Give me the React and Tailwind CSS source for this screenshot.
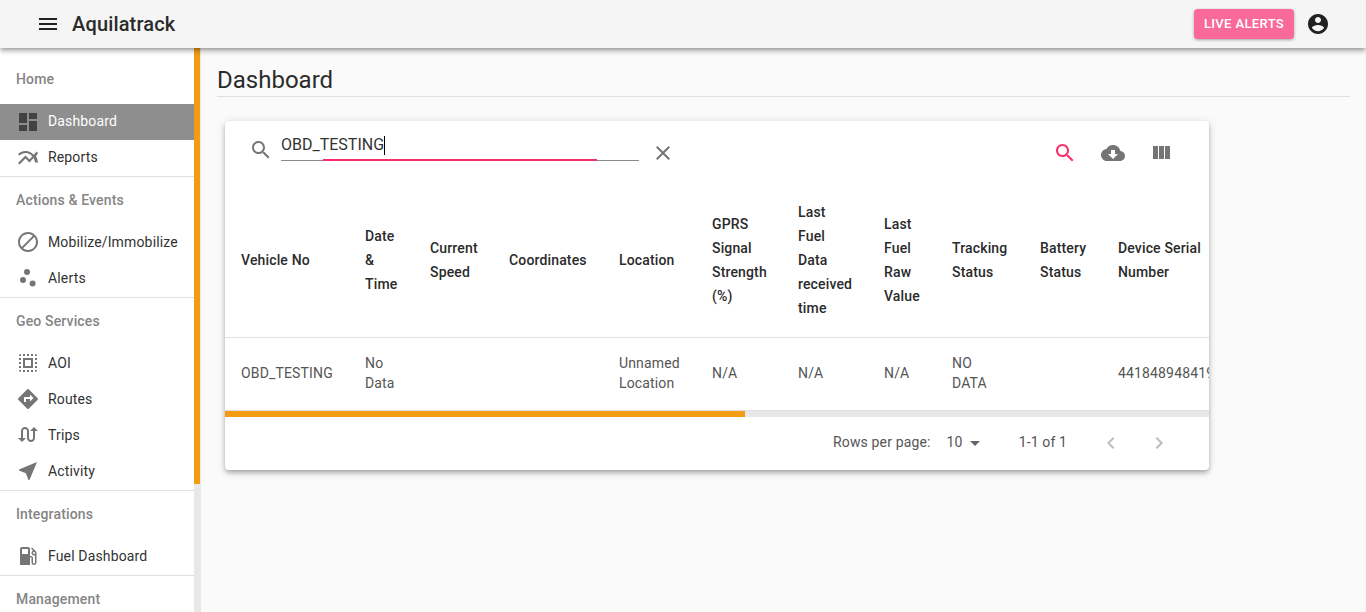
import React from 'react';

const paths = {
  menu: 'M3 18h18v-2H3v2zm0-5h18v-2H3v2zm0-7v2h18V6H3z',
  dashboard: 'M3 13h8V3H3v10zm0 8h8v-6H3v6zm10 0h8V11h-8v10zm0-18v6h8V3h-8z',
  reports: 'M22 6.92l-1.41-1.41-2.85 3.21C15.68 6.4 12.83 5 9.61 5 6.72 5 4.07 6.16 2 8l1.42 1.42C5.12 7.93 7.27 7 9.61 7c2.74 0 5.09 1.26 6.77 3.24l-2.88 3.24-4-4L2 16.99l1.5 1.5 6-6.01 4 4 4.05-4.55c.75 1.35 1.25 2.9 1.44 4.55H21.99c-.22-2.3-.95-4.39-2.04-6.14L22 6.92z',
  block: 'M12 2C6.48 2 2 6.48 2 12s4.48 10 10 10 10-4.48 10-10S17.52 2 12 2zM4 12c0-4.42 3.58-8 8-8 1.85 0 3.55.63 4.9 1.69L5.69 16.9C4.63 15.55 4 13.85 4 12zm8 8c-1.85 0-3.55-.63-4.9-1.69L18.31 7.1C19.37 8.45 20 10.15 20 12c0 4.42-3.58 8-8 8z',
  scatter: 'M7 11a3 3 0 1 0 0 6 3 3 0 0 0 0-6zM11 3a3 3 0 1 0 0 6 3 3 0 0 0 0-6zM16.6 14.6a3 3 0 1 0 0 6 3 3 0 0 0 0-6z',
  selectAll: 'M3 5h2V3c-1.1 0-2 .9-2 2zm0 8h2v-2H3v2zm4 8h2v-2H7v2zM3 9h2V7H3v2zm10-6h-2v2h2V3zm6 0v2h2c0-1.1-.9-2-2-2zM5 21v-2H3c0 1.1.9 2 2 2zm-2-4h2v-2H3v2zM9 3H7v2h2V3zm2 18h2v-2h-2v2zm8-8h2v-2h-2v2zm0 8c1.1 0 2-.9 2-2h-2v2zm0-12h2V7h-2v2zm0 8h2v-2h-2v2zm-4 4h2v-2h-2v2zm0-16h2V3h-2v2zM7 17h10V7H7v10zm2-8h6v6H9V9z',
  directions: 'M21.71 11.29l-9-9a.996.996 0 00-1.41 0l-9 9a.996.996 0 000 1.41l9 9c.39.39 1.02.39 1.41 0l9-9a.996.996 0 000-1.41zM14 14.5V12h-4v3H8v-4c0-.55.45-1 1-1h5V7.5l3.5 3.5-3.5 3.5z',
  swapCalls: 'M18 4l-4 4h3v7c0 1.1-.9 2-2 2s-2-.9-2-2V8c0-2.21-1.79-4-4-4S5 5.79 5 8v7H2l4 4 4-4H7V8c0-1.1.9-2 2-2s2 .9 2 2v7c0 2.21 1.79 4 4 4s4-1.79 4-4V8h3l-4-4z',
  nearMe: 'M21 3L3 10.53v.98l6.84 2.65L12.48 21h.98L21 3z',
  gas: 'M19.77 7.23l.01-.01-3.72-3.72L15 4.56l2.11 2.11c-.94.36-1.61 1.26-1.61 2.33 0 1.38 1.12 2.5 2.5 2.5.36 0 .69-.08 1-.21v7.21c0 .55-.45 1-1 1s-1-.45-1-1V14c0-1.1-.9-2-2-2h-1V5c0-1.1-.9-2-2-2H6c-1.1 0-2 .9-2 2v16h10v-7.5h1.5v5c0 1.38 1.12 2.5 2.5 2.5s2.5-1.12 2.5-2.5V9c0-.69-.28-1.32-.73-1.77zM12 10H6V5h6v5zm6 0c-.55 0-1-.45-1-1s.45-1 1-1 1 .45 1 1-.45 1-1 1z',
  search: 'M15.5 14h-.79l-.28-.27C15.41 12.59 16 11.11 16 9.5 16 5.91 13.09 3 9.5 3S3 5.91 3 9.5 5.91 16 9.5 16c1.61 0 3.09-.59 4.23-1.57l.27.28v.79l5 4.99L20.49 19l-4.99-5zm-6 0C7.01 14 5 11.99 5 9.5S7.01 5 9.5 5 14 7.01 14 9.5 11.99 14 9.5 14z',
  clear: 'M19 6.41L17.59 5 12 10.59 6.41 5 5 6.41 10.59 12 5 17.59 6.41 19 12 13.41 17.59 19 19 17.59 13.41 12z',
  cloud: 'M19.35 10.04C18.67 6.59 15.64 4 12 4 9.11 4 6.6 5.64 5.35 8.04 2.34 8.36 0 10.91 0 14c0 3.31 2.69 6 6 6h13c2.76 0 5-2.24 5-5 0-2.64-2.05-4.78-4.65-4.96zM17 13l-5 5-5-5h3V9h4v4h3z',
  columns: 'M10 18h5V5h-5v13zm-6 0h5V5H4v13zM16 5v13h5V5h-5z',
  account: 'M12 2C6.48 2 2 6.48 2 12s4.48 10 10 10 10-4.48 10-10S17.52 2 12 2zm0 3c1.66 0 3 1.34 3 3s-1.34 3-3 3-3-1.34-3-3 1.34-3 3-3zm0 14.2c-2.5 0-4.71-1.28-6-3.22.03-1.99 4-3.08 6-3.08 1.99 0 5.97 1.09 6 3.08-1.29 1.94-3.5 3.22-6 3.22z',
  left: 'M15.41 7.41L14 6l-6 6 6 6 1.41-1.41L10.83 12z',
  right: 'M10 6L8.59 7.41 13.17 12l-4.58 4.59L10 18l6-6z',
  drop: 'M7 10l5 5 5-5z',
};

function Icon({ name, className }) {
  return (
    <svg viewBox="0 0 24 24" className={`w-6 h-6 shrink-0 fill-current ${className || ''}`}>
      <path d={paths[name]} />
    </svg>
  );
}

const menu = [
  { title: 'Home', first: true, items: [['dashboard', 'Dashboard', true], ['reports', 'Reports']] },
  { title: 'Actions & Events', items: [['block', 'Mobilize/Immobilize'], ['scatter', 'Alerts']] },
  { title: 'Geo Services', items: [['selectAll', 'AOI'], ['directions', 'Routes'], ['swapCalls', 'Trips'], ['nearMe', 'Activity']] },
  { title: 'Integrations', items: [['gas', 'Fuel Dashboard']] },
  { title: 'Management', items: [] },
];

const columns = [
  { label: 'Vehicle No', width: 'w-[124px]', value: 'OBD_TESTING' },
  { label: 'Date & Time', width: 'w-[65px]', value: 'No Data' },
  { label: 'Current Speed', width: 'w-[79px]', value: '' },
  { label: 'Coordinates', width: 'w-[110px]', value: '' },
  { label: 'Location', width: 'w-[93px]', value: 'Unnamed Location' },
  { label: 'GPRS Signal Strength (%)', width: 'w-[86px]', value: 'N/A' },
  { label: 'Last Fuel Data received time', width: 'w-[86px]', value: 'N/A' },
  { label: 'Last Fuel Raw Value', width: 'w-[68px]', value: 'N/A' },
  { label: 'Tracking Status', width: 'w-[88px]', value: 'NO DATA' },
  { label: 'Battery Status', width: 'w-[78px]', value: '' },
  { label: 'Device Serial Number', width: 'w-[116px]', value: '441848948419', nowrap: true },
  { label: '', width: 'w-[869px]', value: '' },
];

function Sidebar() {
  return (
    <aside className="w-[201px] shrink-0 flex bg-white border-r border-[#e8e8e8] overflow-hidden">
      <nav className="w-[194px] shrink-0 tracking-[0.15px]">
        {menu.map((section, i) => (
          <div key={section.title}>
            {i > 0 && <div className={`h-px bg-[#e0e0e0] ${i > 1 ? 'mt-px' : ''}`} />}
            <div className={`flex items-center h-[47px] pl-4 text-[14px] font-medium text-[#858585] ${section.first ? 'mt-[8px] mb-[1px]' : ''}`}>
              {section.title}
            </div>
            {section.items.map(([icon, label, active]) => (
              <div key={label} className={`flex items-center h-9 pl-4 text-[14px] ${active ? 'bg-[#8e8e8e] text-white' : 'text-[#333333]'}`}>
                <Icon name={icon} className={active ? 'text-[#424242]' : 'text-[#757575]'} />
                <span className={`ml-2 ${section.first ? '-mt-[2px]' : ''}`}>{label}</span>
              </div>
            ))}
          </div>
        ))}
      </nav>
      <div className="w-[6px] shrink-0 bg-[#e8e8e8]">
        <div className="h-[436px] bg-[#f39c12]" />
      </div>
    </aside>
  );
}

function DataTable() {
  return (
    <div className="overflow-hidden">
      <table className="table-fixed border-collapse w-[1862px] tracking-[0.15px]">
        <colgroup>
          {columns.map((c) => <col key={c.width + c.label} className={c.width} />)}
        </colgroup>
        <thead>
          <tr className="border-b border-[#e0e0e0]">
            {columns.map((c) => (
              <th key={c.width + c.label} className="px-4 pt-4 pb-[17px] text-left align-middle text-[14px] leading-6 font-medium text-[#2b2b2b]">
                {c.label}
              </th>
            ))}
          </tr>
        </thead>
        <tbody>
          <tr className="border-b border-[#e0e0e0]">
            {columns.map((c) => (
              <td key={c.width + c.label} className={`px-4 pt-[15px] pb-[17px] text-[14px] leading-5 text-[#555555] ${c.nowrap ? 'whitespace-nowrap' : ''}`}>
                {c.value}
              </td>
            ))}
          </tr>
        </tbody>
      </table>
      <div className="h-[6px] bg-[#e8e8e8]">
        <div className="h-[6px] w-[520px] bg-[#f39c12]" />
      </div>
    </div>
  );
}

export default function App() {
  return (
    <div className="h-[612px] flex flex-col overflow-hidden bg-[#fafafa] font-['Roboto',sans-serif]">
      <header className="relative z-10 h-12 shrink-0 flex items-center pl-9 pr-9 bg-[#f5f5f5] shadow-[0_2px_4px_-1px_rgba(0,0,0,0.3),0_4px_5px_0_rgba(0,0,0,0.18)]">
        <Icon name="menu" className="text-[#212121]" />
        <h1 className="ml-3 text-[20px] font-medium tracking-[0.15px] text-[#2b2b2b]">Aquilatrack</h1>
        <button className="ml-auto w-[100px] h-[30px] rounded bg-[#f96a9b] text-white text-[13px] font-medium tracking-[0.37px] shadow-[0_1px_3px_rgba(0,0,0,0.35)]">
          LIVE ALERTS
        </button>
        <Icon name="account" className="ml-3 text-[#212121]" />
      </header>

      <div className="flex-1 flex min-h-0">
        <Sidebar />
        <main className="flex-1 pl-4 pr-4 pt-4">
          <h2 className="text-2xl leading-8 text-[#2b2b2b]">Dashboard</h2>
          <div className="h-px bg-[#e0e0e0]" />

          <section className="mt-6 ml-2 w-[984px] rounded bg-white shadow-[0_2px_4px_-1px_rgba(0,0,0,0.2),0_4px_5px_0_rgba(0,0,0,0.14),0_1px_10px_0_rgba(0,0,0,0.12)]">
            <div className="h-[63px] flex items-start pl-6 pr-9">
              <Icon name="search" className="mt-[17px] text-[#757575]" />
              <div className="relative ml-2 mt-[11px] w-[358px] h-[29px] border-b border-[#8c8c8c]">
                <div className="pt-px text-[16px] leading-6 text-[#333333] flex items-center">
                  OBD_TESTING<span className="inline-block w-px h-[19px] bg-black" />
                </div>
                <div className="absolute left-[42px] bottom-[-1px] w-[274px] h-[2px] bg-[#fb2d68]" />
              </div>
              <Icon name="clear" className="ml-3 mt-5 text-[#757575]" />
              <div className="ml-auto mt-5 flex gap-6">
                <Icon name="search" className="text-[#fb2d68]" />
                <Icon name="cloud" className="text-[#757575]" />
                <Icon name="columns" className="text-[#757575]" />
              </div>
            </div>

            <DataTable />

            <div className="h-[53px] pb-[2px] flex items-center pr-[38px] whitespace-nowrap text-[14px] tracking-[0.15px] text-[#555555]">
              <span className="ml-[608px]">Rows per page:</span>
              <span className="ml-4">10</span>
              <Icon name="drop" className="text-[#666666]" />
              <span className="ml-8">1-1 of 1</span>
              <Icon name="left" className="ml-8 text-[#bdbdbd]" />
              <Icon name="right" className="ml-6 text-[#bdbdbd]" />
            </div>
          </section>
        </main>
      </div>
    </div>
  );
}
